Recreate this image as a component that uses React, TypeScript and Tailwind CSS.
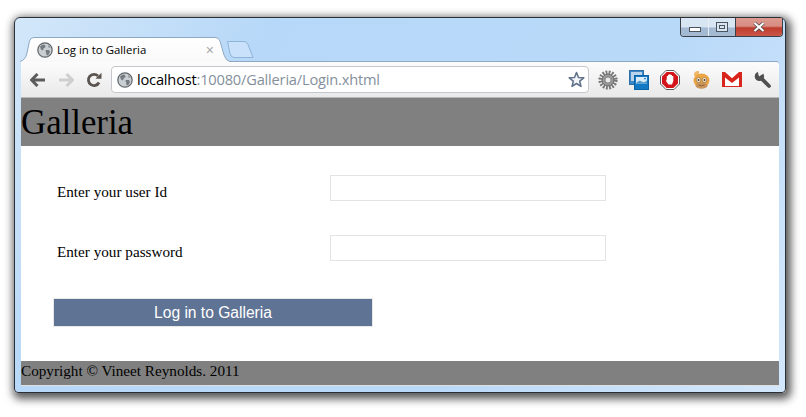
import type { ReactNode } from "react";

const Globe = ({ s = 16 }: { s?: number }) => (
  <svg width={s} height={s} viewBox="0 0 16 16" className="shrink-0">
    <circle cx="8" cy="8" r="7.2" fill="#c9ced2" stroke="#5f6468" strokeWidth="1.2" />
    <path d="M3 4.5 L6 2.5 L8 3 L8.5 5 L6.5 6.5 L6 8.5 L4 7.5 Z" fill="#747a7f" />
    <path d="M8.5 8 L12 8 L13 10 L11 13.5 L9.5 13 L9 10.5 Z" fill="#747a7f" />
    <path d="M11 3 L13 4.5 L13.5 6 L11.5 5.5 Z" fill="#8b9095" />
  </svg>
);

const Back = () => (
  <svg width="16" height="14" viewBox="0 0 16 14">
    <path d="M7.5 1 L1.5 7 L7.5 13 M2 7 H15" fill="none" stroke="#5c5c5c" strokeWidth="3" />
  </svg>
);

const Forward = () => (
  <svg width="16" height="14" viewBox="0 0 16 14">
    <path d="M8.5 1 L14.5 7 L8.5 13 M14 7 H1" fill="none" stroke="#cfcfcf" strokeWidth="3" />
  </svg>
);

const Reload = () => (
  <svg width="16" height="16" viewBox="0 0 16 16">
    <path d="M13 10.5 A5.6 5.6 0 1 1 12 4" fill="none" stroke="#5b5450" strokeWidth="2.8" />
    <path d="M9.5 6.8 H15.5 V0.8 Z" fill="#5b5450" />
  </svg>
);

const Star = () => (
  <svg width="17" height="17" viewBox="0 0 17 17">
    <path d="M8.5 1.5 L10.5 6.5 L15.8 6.8 L11.7 10.2 L13 15.4 L8.5 12.5 L4 15.4 L5.3 10.2 L1.2 6.8 L6.5 6.5 Z" fill="#f3f5f8" stroke="#5f7089" strokeWidth="1.5" strokeLinejoin="round" />
  </svg>
);

const Gear = () => (
  <svg width="20" height="20" viewBox="0 0 20 20">
    <circle cx="10" cy="10" r="7.8" fill="none" stroke="#777" strokeWidth="3.6" strokeDasharray="1.8 1.3" />
    <circle cx="10" cy="10" r="6" fill="#989898" stroke="#666" strokeWidth="1" />
    <circle cx="10" cy="10" r="3" fill="#e8e8e8" stroke="#7a7a7a" strokeWidth="0.8" />
  </svg>
);

const Photos = () => (
  <svg width="20" height="20" viewBox="0 0 20 20">
    <rect x="0.5" y="0.5" width="14" height="14" fill="#3f86c4" stroke="#2c6fa8" />
    <rect x="2" y="2" width="11" height="9" fill="#b9d4ea" />
    <rect x="5.5" y="5.5" width="14" height="14" fill="#1479c4" stroke="#0d64a6" />
    <rect x="7" y="7" width="11" height="6.5" fill="#dcecf6" />
    <path d="M7 13.5 Q10 9.5 12.5 11.5 T18 10.5 V13.5 Z" fill="#4f97cc" />
    <circle cx="16" cy="8.6" r="0.9" fill="#1479c4" />
  </svg>
);

const Stop = () => (
  <svg width="20" height="20" viewBox="0 0 20 20">
    <path d="M6 0.5 H14 L19.5 6 V14 L14 19.5 H6 L0.5 14 V6 Z" fill="#fff" stroke="#5d5d5d" />
    <path d="M6.6 2 H13.4 L18 6.6 V13.4 L13.4 18 H6.6 L2 13.4 V6.6 Z" fill="#d3141b" />
    <path d="M6.8 9 V6 H8 V4.8 H9.2 V4.2 H10.6 V5 H12 V6 H13.3 V11 L12 14.6 H8.4 L6 11 Z" fill="#fff" />
  </svg>
);

const Face = () => (
  <svg width="20" height="20" viewBox="0 0 20 20">
    <path d="M3 6 Q2.5 0.5 8 1 Q8.5 3 7 6 Z" fill="#efb868" />
    <ellipse cx="10.5" cy="10.5" rx="8" ry="7" fill="#eda544" />
    <ellipse cx="10.5" cy="15.5" rx="6" ry="3.2" fill="#c9935a" />
    <circle cx="7.5" cy="10" r="2.4" fill="#fff1d6" stroke="#7d5a32" strokeWidth="0.6" />
    <circle cx="13.5" cy="10" r="2.4" fill="#fff1d6" stroke="#7d5a32" strokeWidth="0.6" />
    <circle cx="7.5" cy="10" r="1" fill="#4a3a2a" />
    <circle cx="13.5" cy="10" r="1" fill="#4a3a2a" />
    <path d="M7.5 15 Q10.5 16.5 13.5 15" fill="none" stroke="#7d5a32" strokeWidth="0.8" />
  </svg>
);

const Gmail = () => (
  <svg width="20" height="15" viewBox="0 0 20 15">
    <rect x="0" y="0" width="20" height="15" fill="#fff" />
    <path d="M0 0 H3 L10 6.2 L17 0 H20 V15 H0 Z M3 14 H17 V5.4 L10 11 L3 5.4 Z" fill="#d8261c" fillRule="evenodd" />
  </svg>
);

const Wrench = () => (
  <svg width="18" height="18" viewBox="0 0 18 18">
    <path d="M6 6 L15 15" stroke="#505050" strokeWidth="3.8" strokeLinecap="round" />
    <circle cx="5.4" cy="5.4" r="4.7" fill="#505050" />
    <path d="M5 5.4 L3.4 -0.5 H8.5 L10.5 1.8 Z" fill="#f2f2f2" />
  </svg>
);

const fieldClass = "h-[26px] w-[276px] border border-[#e3e3e3] bg-white outline-none";

const Cell = ({ children }: { children: ReactNode }) => (
  <div className="flex w-[31px] items-center justify-center">{children}</div>
);

export default function App() {
  return (
    <div className="h-[417px] w-[806px] overflow-hidden bg-white pl-[14px] pt-[17px]">
      <div className="relative flex h-[376px] w-[772px] flex-col rounded-t-[6px] rounded-b-[4px] border border-[#2b3036] bg-[linear-gradient(125deg,#d3e7f9_0%,#b7d8f8_25%,#b9d9f9_65%,#d3e7fb_100%)] shadow-[2px_3px_9px_3px_rgba(0,0,0,0.65)]">
        {/* window controls */}
        <div className="absolute right-[2px] top-0 flex h-[19px] w-[103px] overflow-hidden rounded-b-[4px] border border-t-0 border-[#3a4048]">
          <div className="flex h-full w-[28px] items-end justify-center border-r border-[#e8eef4] bg-[linear-gradient(#d8e6f3_0%,#d8e6f3_50%,#a4bad3_55%,#a4bad3_100%)] pb-[4px]">
            <div className="h-[5px] w-[12px] border border-[#4a5560] bg-white" />
          </div>
          <div className="flex h-full w-[27px] items-center justify-center border-r border-[#3a4048] bg-[linear-gradient(#d8e6f3_0%,#d8e6f3_50%,#a4bad3_55%,#a4bad3_100%)]">
            <div className="flex h-[10px] w-[12px] items-center justify-center border border-[#4a5560] bg-[#d8e6f3]">
              <div className="h-[4px] w-[6px] border border-[#4a5560]" />
            </div>
          </div>
          <div className="flex h-full flex-1 items-center justify-center bg-[linear-gradient(#dc9b90_0%,#d88c82_45%,#bf3c2d_55%,#c9574a_100%)]">
            <svg width="12" height="10" viewBox="0 0 12 10">
              <path d="M1.5 1 L10.5 9 M10.5 1 L1.5 9" stroke="#3f3f3f" strokeWidth="3.4" />
              <path d="M1.5 1 L10.5 9 M10.5 1 L1.5 9" stroke="#fff" strokeWidth="2.2" />
            </svg>
          </div>
        </div>

        <div className="flex flex-1 flex-col px-[6px] pb-[6px] pt-[19px]">
          {/* tab strip */}
          <div className="flex h-[24px] items-end">
            <div className="relative -mb-[1px] -ml-[1px] flex h-[25px] w-[210px] items-center pl-[17px] pr-[16px]">
              <svg className="absolute left-0 top-0" width="210" height="25" viewBox="0 0 210 25">
                <defs>
                  <linearGradient id="tabFill" x1="0" y1="0" x2="0" y2="1">
                    <stop offset="0" stopColor="#ffffff" />
                    <stop offset="1" stopColor="#f9f9f9" />
                  </linearGradient>
                </defs>
                <path d="M0 24.5 Q5.5 23 7 16 L9.5 4 Q10.5 0.5 14 0.5 H195 Q199 0.5 200 4 L204 18 Q206 24 210 24.5 V25 H0 Z" fill="url(#tabFill)" />
                <path d="M0 24.5 Q5.5 23 7 16 L9.5 4 Q10.5 0.5 14 0.5 H195 Q199 0.5 200 4 L204 18 Q206 24 210 24.5" fill="none" stroke="#8fa8c2" />
              </svg>
              <div className="relative flex w-full items-center">
                <Globe />
                <span className="ml-[4px] flex-1 text-[11.4px] leading-[16px] text-black [font-family:'Open_Sans',sans-serif]">Log in to Galleria</span>
                <span className="text-[14px] leading-[14px] text-[#a8a8a8] [font-family:'Liberation_Sans',sans-serif]">×</span>
              </div>
            </div>
            <svg className="mb-[3px] -ml-[3px] shrink-0" width="27" height="17" viewBox="0 0 27 17">
              <path d="M0.5 0.5 H17 Q20 0.5 21 3.5 L26 16.5 H7 Q4 16.5 3 12.5 Z" fill="#c9e1fa" stroke="#8fb4d8" />
            </svg>
          </div>
          {/* toolbar */}
          <div className="flex h-[36px] items-center rounded-tr-[3px] border-t border-[#8fa8c2] bg-[linear-gradient(#fcfcfc,#e9e9e9)] pl-[9px]">
            <Back />
            <div className="ml-[12px]"><Forward /></div>
            <div className="ml-[12px]"><Reload /></div>
            <div className="ml-[9px] flex h-[27px] w-[478px] items-center rounded-[4px] border border-[#c4c8cc] bg-white pl-[5px] pr-[3px] text-[14.65px] [font-family:'Open_Sans',sans-serif]">
              <Globe />
              <span className="ml-[4px] flex-1 whitespace-nowrap pt-[1px] tracking-[-0.2px] text-black">localhost<span className="text-[#84909c]">:10080/Galleria/Login.xhtml</span></span>
              <Star />
            </div>
            <div className="ml-[3px] flex items-center">
              <Cell><Gear /></Cell>
              <Cell><Photos /></Cell>
              <Cell><Stop /></Cell>
              <Cell><Face /></Cell>
              <Cell><Gmail /></Cell>
              <Cell><Wrench /></Cell>
            </div>
          </div>
          {/* page */}
          <div className="flex flex-1 flex-col border-t border-[#b8b8b8] bg-white text-black [font-family:'Liberation_Serif',serif]">
            <div className="flex h-[48px] items-center bg-[#808080] pt-[2px] text-[34.8px] leading-[48px]">Galleria</div>
            <div className="flex flex-1 flex-col pl-[32px] pt-[29px]">
              <div className="flex h-[26px] items-center">
                <label className="ml-[4px] w-[273px] pt-[8px] text-[15.2px] leading-[18px]">Enter your user Id</label>
                <input className={fieldClass} />
              </div>
              <div className="mt-[34px] flex h-[26px] items-center">
                <label className="ml-[4px] w-[273px] pt-[8px] text-[15.2px] leading-[18px]">Enter your password</label>
                <input className={fieldClass} />
              </div>
              <button className="mt-[37px] h-[29px] w-[320px] border border-[#e8e8e8] bg-[#5f7495] text-[15.6px] text-white [font-family:'Liberation_Sans',sans-serif]">Log in to Galleria</button>
            </div>
            <div className="flex h-[24px] items-center bg-[#808080] pb-[4px] text-[15.2px] leading-[20px]">Copyright © Vineet Reynolds. 2011</div>
            <div className="h-[1px] bg-[#e0e0e0]" />
          </div>
        </div>
      </div>
    </div>
  );
}
